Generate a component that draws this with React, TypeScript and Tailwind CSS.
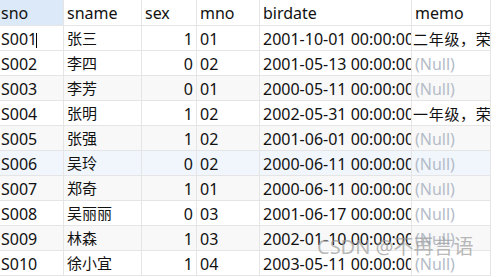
import React from 'react';

const rows = [
  { sno: 'S001', sname: '张三', sex: 1, mno: '01', birdate: '2001-10-01 00:00:00', memo: '二年级，荣誉学生' },
  { sno: 'S002', sname: '李四', sex: 0, mno: '02', birdate: '2001-05-13 00:00:00', memo: null },
  { sno: 'S003', sname: '李芳', sex: 0, mno: '01', birdate: '2000-05-11 00:00:00', memo: null },
  { sno: 'S004', sname: '张明', sex: 1, mno: '02', birdate: '2002-05-31 00:00:00', memo: '一年级，荣誉学生' },
  { sno: 'S005', sname: '张强', sex: 1, mno: '02', birdate: '2001-06-01 00:00:00', memo: null },
  { sno: 'S006', sname: '吴玲', sex: 0, mno: '02', birdate: '2000-06-11 00:00:00', memo: null },
  { sno: 'S007', sname: '郑奇', sex: 1, mno: '01', birdate: '2000-06-11 00:00:00', memo: null },
  { sno: 'S008', sname: '吴丽丽', sex: 0, mno: '03', birdate: '2001-06-17 00:00:00', memo: null },
  { sno: 'S009', sname: '林森', sex: 1, mno: '03', birdate: '2002-01-10 00:00:00', memo: null },
  { sno: 'S010', sname: '徐小宜', sex: 1, mno: '04', birdate: '2003-05-11 00:00:00', memo: null },
];

const grid = 'grid grid-cols-[64px_78px_55px_63px_152px_79px] w-[491px]';
const cell = 'border-r border-b border-[#e5e5e5] overflow-hidden whitespace-nowrap';

export default function App() {
  return (
    <div className="relative w-[496px] h-[277px] overflow-hidden bg-white text-[16px] leading-none text-[#111] font-['Segoe_UI','Noto_Sans','Noto_Sans_CJK_SC',sans-serif]">
      {/* header */}
      <div className={grid}>
        <div className={`${cell} h-[26px] bg-[#dbe9f8] pl-[1px] pt-[5px]`}>sno</div>
        <div className={`${cell} h-[26px] pl-[3px] pt-[5px]`}>sname</div>
        <div className={`${cell} h-[26px] pl-[3px] pt-[5px]`}>sex</div>
        <div className={`${cell} h-[26px] pl-[3px] pt-[5px]`}>mno</div>
        <div className={`${cell} h-[26px] pl-[3px] pt-[5px]`}>birdate</div>
        <div className={`${cell} h-[26px] pl-[3px] pt-[5px]`}>memo</div>
      </div>

      {rows.map((r, i) => {
        const bg = r.sno === 'S006' ? 'bg-[#f1f6fc]' : i % 2 === 0 && i > 0 ? 'bg-[#f8f8f8]' : 'bg-white';
        return (
          <div key={r.sno} className={`${grid} ${bg}`}>
            <div className={`${cell} h-[25px] pl-[1px] pt-[5px] relative`}>
              {r.sno}
              {i === 0 && <span className="absolute left-[36px] top-[7px] w-px h-[15px] bg-black" />}
            </div>
            <div className={`${cell} h-[25px] pl-[3px] pt-[5px] text-[15px]`}>{r.sname}</div>
            <div className={`${cell} h-[25px] pr-[3px] pt-[5px] text-right`}>{r.sex}</div>
            <div className={`${cell} h-[25px] pl-[3px] pt-[5px]`}>{r.mno}</div>
            <div className={`${cell} h-[25px] pl-[3px] pt-[5px]`}>{r.birdate}</div>
            <div className={`${cell} h-[25px] pl-[1px] pt-[5px]`}>
              {r.memo ? (
                <span className="text-[15px] tracking-[0.7px]">{r.memo}</span>
              ) : (
                <span className="pl-[2px] text-[#b4bcc8]">(Null)</span>
              )}
            </div>
          </div>
        );
      })}

      {/* watermark */}
      <div className="absolute left-[317px] top-[237px] text-[20px] leading-none text-[#9a9a9a]/70 whitespace-nowrap">
        CSDN @不再言语
      </div>
    </div>
  );
}
